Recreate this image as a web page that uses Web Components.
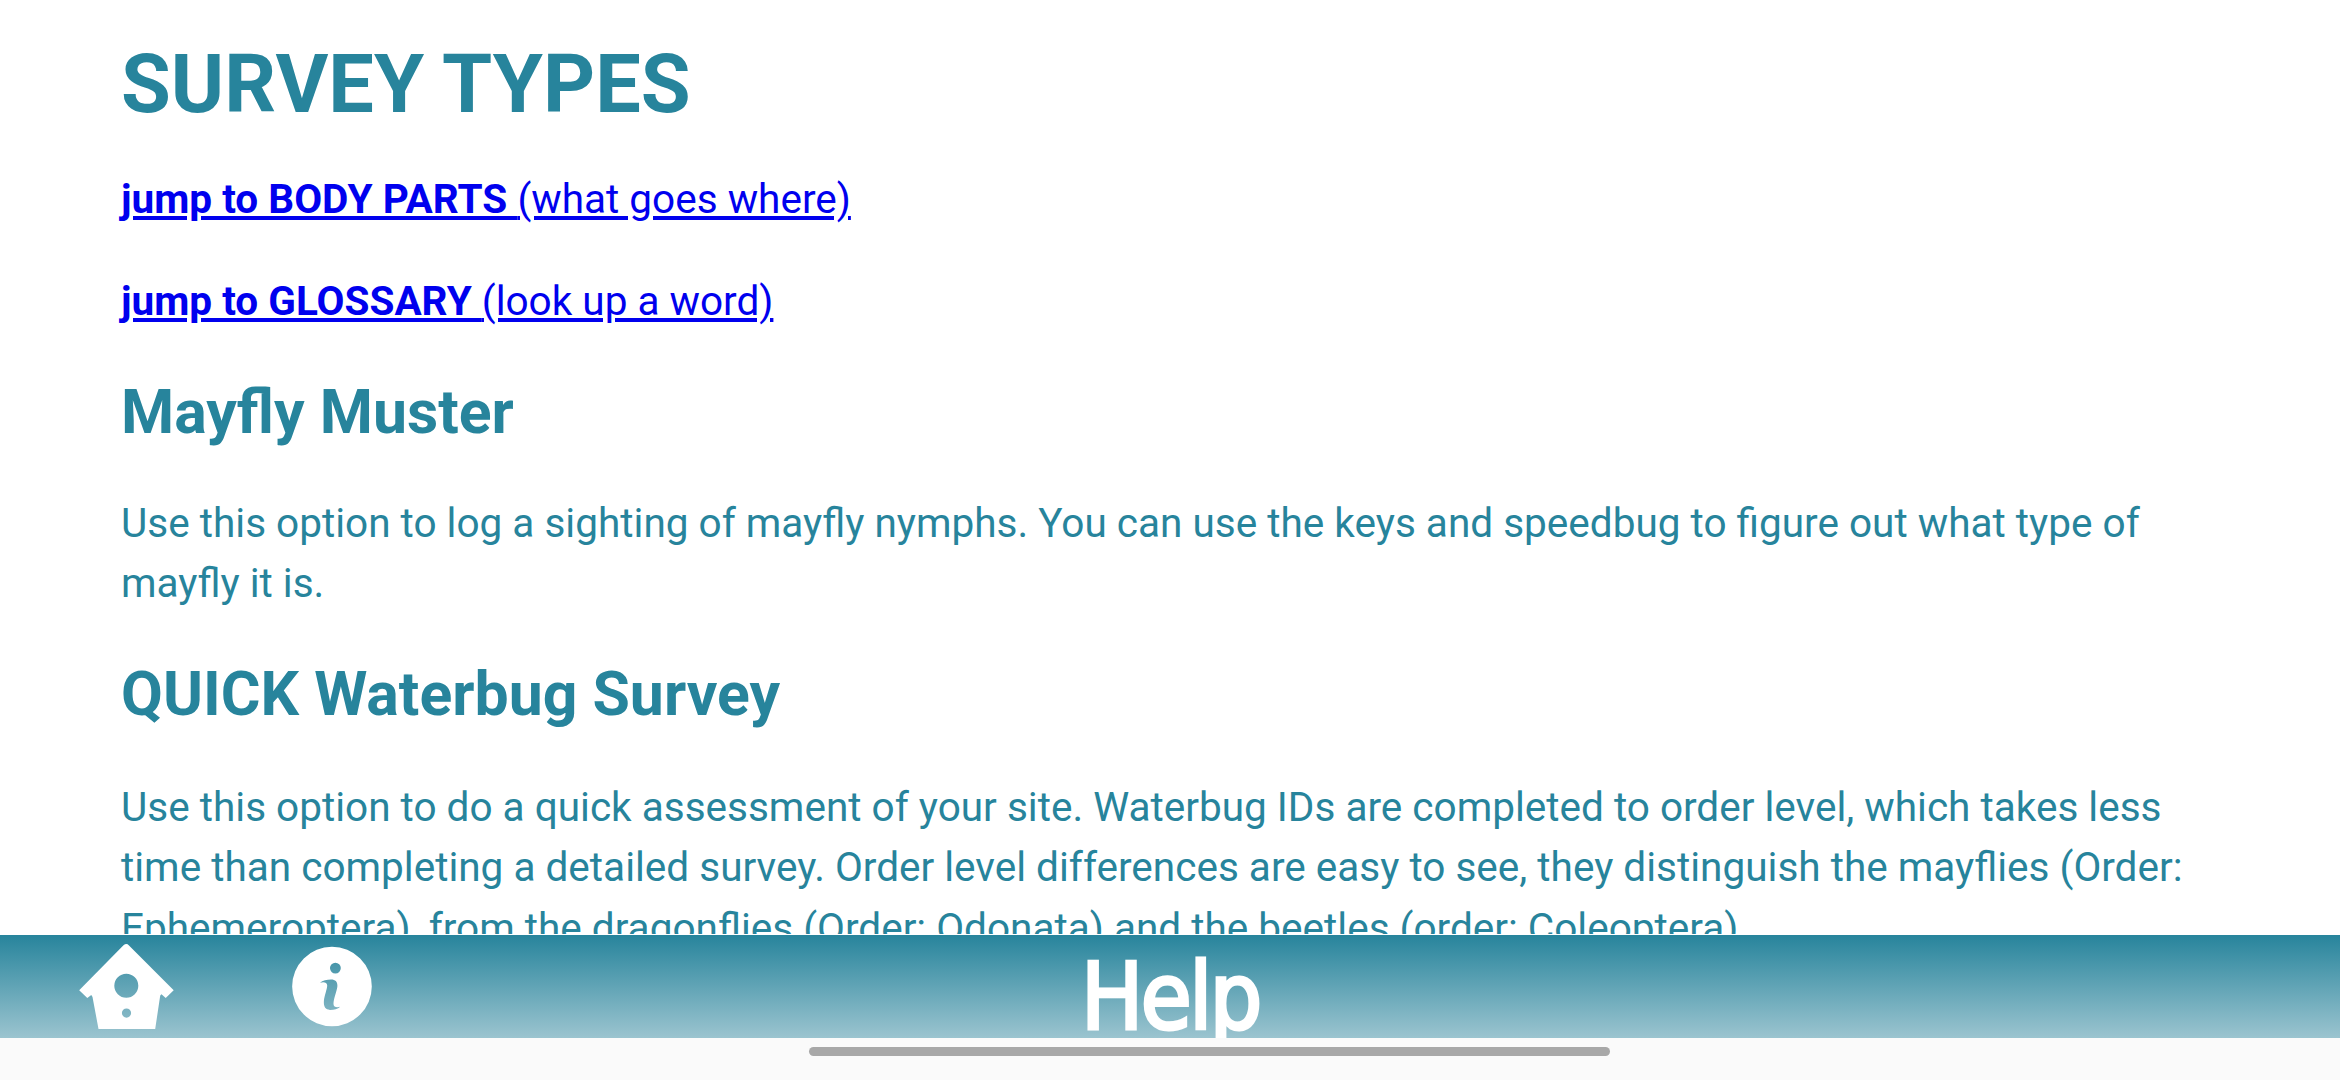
<!DOCTYPE html>
<html lang="en">
<head>
<meta charset="utf-8">
<title>Help</title>
<style>
html,body{margin:0;height:100%;overflow:hidden;background:#fafafa}
</style>
</head>
<body>
<help-screen>
  <help-heading>SURVEY TYPES</help-heading>
  <jump-link label="jump to BODY PARTS">(what goes where)</jump-link>
  <jump-link label="jump to GLOSSARY">(look up a word)</jump-link>
  <help-section heading="Mayfly Muster" style="--text-gap:44px">Use this option to log a sighting of mayfly nymphs. You can use the keys and speedbug to figure out what type of mayfly it is.</help-section>
  <help-section heading="QUICK Waterbug Survey" style="--text-gap:46px">Use this option to do a quick assessment of your site. Waterbug IDs are completed to order level, which takes less time than completing a detailed survey. Order level differences are easy to see, they distinguish the mayflies (Order: Ephemeroptera), from the dragonflies (Order: Odonata) and the beetles (order: Coleoptera).</help-section>
  <tool-bar slot="bar" heading="Help"></tool-bar>
  <gesture-bar slot="bar"></gesture-bar>
</help-screen>
<script>
const define = (name, render) => customElements.define(name, class extends HTMLElement {
  connectedCallback() {
    if (!this.shadowRoot) this.attachShadow({mode: 'open'}).innerHTML = render(this);
  }
});

define('help-screen', () => `
<style>
:host{display:flex;flex-direction:column;width:2340px;height:1080px;font:40.53px/60.5px Roboto,sans-serif;color:#27849c}
main{box-sizing:border-box;height:934px;overflow:hidden;background:#fff;padding:37px 150px 0 121px}
.edge{height:1px;background:#fff}
</style>
<main><slot></slot></main><div class="edge"></div><slot name="bar"></slot>`);

define('help-heading', () => `
<style>
:host{display:block}
h1{margin:0;font-size:81px;line-height:96px;font-weight:700}
</style>
<h1><slot></slot></h1>`);

define('jump-link', el => `
<style>
:host{display:block;margin-top:36px;margin-bottom:41.5px}
a{color:#0000ee;text-decoration:underline}
b{font-weight:700}
</style>
<a href="#"><b>${el.getAttribute('label')} </b><slot></slot></a>`);

define('help-section', el => `
<style>
:host{display:block}
h2{margin:45px 0 var(--text-gap,45px);font-size:60.75px;line-height:72px;font-weight:700}
p{margin:0}
</style>
<h2>${el.getAttribute('heading')}</h2><p><slot></slot></p>`);

define('house-icon', () => `
<style>:host{display:block;width:96px;height:88px}svg{display:block}</style>
<svg width="96" height="88" viewBox="78 943 96 88"><path fill="#fff" fill-rule="evenodd" d="M126.3 944q1.4 0 2.7 1.4L173.7 990.3 165.7 998 161.5 994.2Q160 995 160 997L155.2 1029H98.5L92.5 997 91.3 995 87.3 998 79.2 990.3 123.5 945.3Q125 944 126.3 944ZM126.3 973.8a12 12 0 1 0 0 24 12 12 0 1 0 0-24ZM126.5 1008.5a4.6 4.6 0 1 0 0 9.2 4.6 4.6 0 1 0 0-9.2Z"/></svg>`);

define('info-icon', () => `
<style>:host{display:block;width:82px;height:88px}svg{display:block}</style>
<svg width="82" height="88" viewBox="291 943 82 88"><path fill="#fff" fill-rule="evenodd" d="M332 946.8a39.8 39.7 0 1 0 0 79.4 39.8 39.7 0 1 0 0-79.4ZM335.4 962.7a5.4 5.4 0 1 0 0 10.8 5.4 5.4 0 1 0 0-10.8ZM320 982.8C322.5 980.2 327 979.4 331 979.4C336 979.5 337.8 982 337.3 987C336.7 991.5 333.5 999 333.5 1004C333.5 1007.5 337 1007.8 340.3 1006.8C337.5 1009 334.5 1009.9 330 1009.9C325 1009.6 323.6 1006.5 323.9 1001C324.3 996 327.2 989 327.2 985.5C327.2 981.9 323 982 320 982.8Z"/></svg>`);

define('tool-bar', el => `
<style>
:host{display:grid;grid-template-columns:1fr auto 1fr;height:103px;overflow:hidden;background:linear-gradient(#27849c,#9bc4cf)}
nav{display:flex;gap:117px;padding:8px 0 0 78px}
h1{margin:11px 0 0;padding-left:1px;font:92px/103px "DejaVu Sans Condensed","DejaVu Sans",sans-serif;font-stretch:condensed;letter-spacing:-2.5px;color:#fff;-webkit-text-stroke:3.2px #fff;white-space:nowrap}
</style>
<nav><house-icon></house-icon><info-icon></info-icon></nav><h1>${el.getAttribute('heading')}</h1><span></span>`);

define('gesture-bar', () => `
<style>
:host{display:flex;height:42px;box-sizing:border-box;padding:9px 0 0 809px;background:#fafafa}
div{width:801px;height:9px;border-radius:5px;background:#a8a8a8}
</style>
<div></div>`);
</script>
</body>
</html>
